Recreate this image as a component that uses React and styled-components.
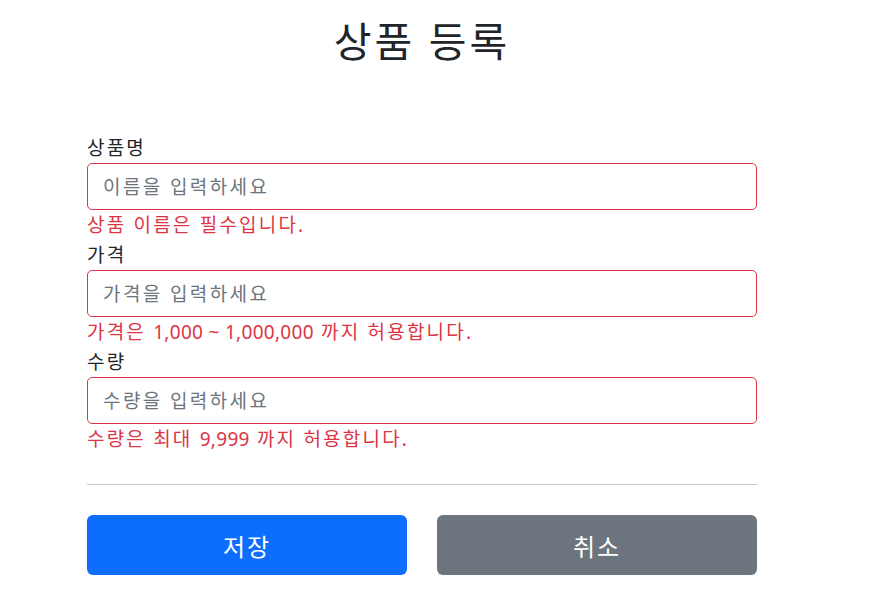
import React from "react";
import styled, { createGlobalStyle } from "styled-components";

const GlobalStyle = createGlobalStyle`
  * { box-sizing: border-box; }
  body {
    margin: 0;
    background: #fff;
    color: #212529;
    font-family: "Noto Sans", "Noto Sans CJK KR", sans-serif;
    font-size: 20px;
    line-height: 1.5;
  }
`;

const Container = styled.div`
  width: 670px;
  margin-left: 87px;
  padding-top: 17px;
`;

const Header = styled.div`
  text-align: center;
  margin-bottom: 68px;
`;

const Title = styled.h2`
  margin: 0;
  font-size: 41px;
  font-weight: 400;
  line-height: 48px;
  letter-spacing: 3px;
`;

const Field = styled.div`
  display: flex;
  flex-direction: column;
`;

const Label = styled.label`
  display: block;
  height: 30px;
  font-size: 19px;
  line-height: 30px;
  letter-spacing: 2.2px;
`;

const Input = styled.input`
  display: block;
  width: 100%;
  height: 47px;
  padding: 0 15px;
  font-family: inherit;
  font-size: 19px;
  letter-spacing: 2.4px;
  color: #212529;
  background: #fff;
  border: 1px solid ${p => (p.$invalid ? "#dc3545" : "#ced4da")};
  border-radius: 5px;
  outline: none;
  &::placeholder {
    color: #6c757d;
  }
`;

const FieldError = styled.div`
  height: 30px;
  line-height: 30px;
  font-size: 19px;
  letter-spacing: 2.2px;
  color: #dc3545;
`;

const Num = styled.span`
  letter-spacing: 0.3px;
`;

const Divider = styled.hr`
  margin: 30px 0;
  border: 0;
  border-top: 1px solid #c9c9c9;
`;

const ButtonRow = styled.div`
  display: grid;
  grid-template-columns: 1fr 1fr;
  gap: 30px;
`;

const Button = styled.button`
  height: 60px;
  border: 0;
  border-radius: 6px;
  font-family: inherit;
  font-size: 24px;
  letter-spacing: 2px;
  color: #fff;
  background: ${p => (p.$variant === "secondary" ? "#6c757d" : "#0d6efd")};
  cursor: pointer;
`;

const fields = [
  { id: "itemName", label: "상품명", placeholder: "이름을 입력하세요", error: "상품 이름은 필수입니다." },
  { id: "price", label: "가격", placeholder: "가격을 입력하세요", error: "가격은 1,000 ~ 1,000,000 까지 허용합니다." },
  { id: "quantity", label: "수량", placeholder: "수량을 입력하세요", error: "수량은 최대 9,999 까지 허용합니다." },
];

// digits sit tighter than hangul in the original rendering
function renderError(text) {
  return text
    .split(/(\d[\d,]*(?: ~ \d[\d,]*)?)/)
    .map((part, i) => (i % 2 ? <Num key={i}>{part}</Num> : part));
}

export default function App() {
  return (
    <>
      <GlobalStyle />
      <Container>
        <Header>
          <Title>상품 등록</Title>
        </Header>
        <form onSubmit={e => e.preventDefault()}>
          {fields.map(f => (
            <Field key={f.id}>
              <Label htmlFor={f.id}>{f.label}</Label>
              <Input id={f.id} placeholder={f.placeholder} $invalid />
              <FieldError>{renderError(f.error)}</FieldError>
            </Field>
          ))}
          <Divider />
          <ButtonRow>
            <Button type="submit">저장</Button>
            <Button type="button" $variant="secondary">취소</Button>
          </ButtonRow>
        </form>
      </Container>
    </>
  );
}
